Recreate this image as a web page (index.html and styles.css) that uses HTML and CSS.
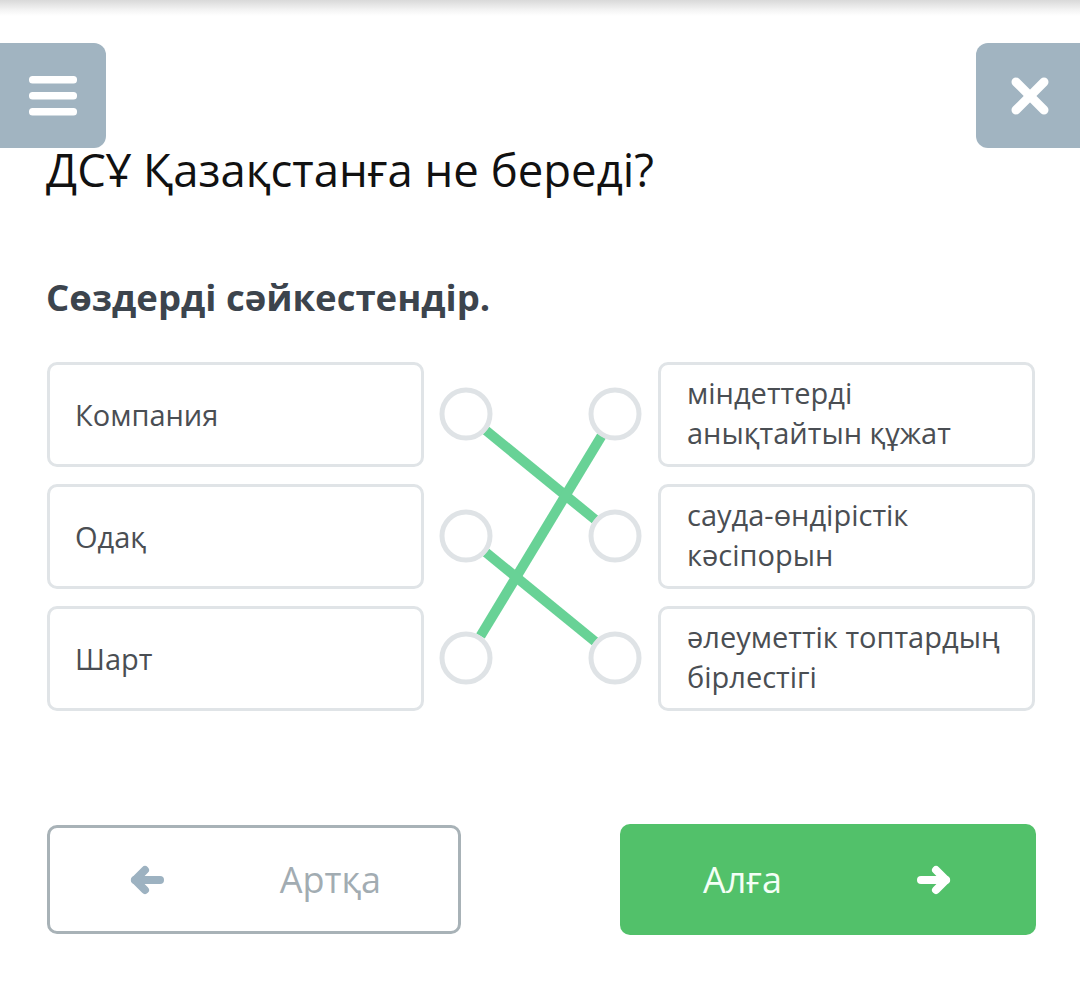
FILE: index.html
```html
<!DOCTYPE html>
<html lang="kk">
<head>
<meta charset="utf-8">
<title>ДСҰ Қазақстанға не береді?</title>
<link rel="stylesheet" href="styles.css">
</head>
<body>
<div class="topshade"></div>
<button class="nav-btn menu-btn" aria-label="Мәзір">
  <svg width="48" height="40" viewBox="0 0 48 40"><g fill="#fff"><rect x="0" y="0" width="48" height="7.5" rx="3.5"/><rect x="0" y="16" width="48" height="7.5" rx="3.5"/><rect x="0" y="32" width="48" height="7.5" rx="3.5"/></g></svg>
</button>
<button class="nav-btn close-btn" aria-label="Жабу">
  <svg width="40" height="40" viewBox="0 0 40 40"><g stroke="#fff" stroke-width="9" stroke-linecap="round"><line x1="6" y1="6" x2="34" y2="34"/><line x1="34" y1="6" x2="6" y2="34"/></g></svg>
</button>

<main class="page">
  <h1 class="title">ДСҰ Қазақстанға не береді?</h1>
  <h2 class="subtitle">Сөздерді сәйкестендір.</h2>

  <section class="match">
    <div class="card l1">Компания</div>
    <div class="card l2">Одақ</div>
    <div class="card l3">Шарт</div>

    <svg class="links" width="234" height="349" viewBox="0 0 234 349">
      <g stroke="#68d296" stroke-width="10" stroke-linecap="butt">
        <line x1="62" y1="68.5" x2="171" y2="157.5"/>
        <line x1="177.5" y1="74" x2="56.5" y2="274"/>
        <line x1="62" y1="190.5" x2="171" y2="279.5"/>
      </g>
      <g fill="none" stroke="#dfe3e6" stroke-width="5">
        <circle cx="42" cy="52" r="24"/>
        <circle cx="42" cy="174" r="24"/>
        <circle cx="42" cy="296" r="24"/>
        <circle cx="191" cy="52" r="24"/>
        <circle cx="191" cy="174" r="24"/>
        <circle cx="191" cy="296" r="24"/>
      </g>
    </svg>

    <div class="card r1">міндеттерді анықтайтын құжат</div>
    <div class="card r2">сауда-өндірістік кәсіпорын</div>
    <div class="card r3">әлеуметтік топтардың бірлестігі</div>
  </section>

  <nav class="actions">
    <button class="act back">
      <svg width="36" height="30" viewBox="0 0 36 30"><g stroke="#9db2c1" stroke-width="8" stroke-linecap="round" stroke-linejoin="round" fill="none"><line x1="6" y1="15" x2="31" y2="15"/><polyline points="16,5 6,15 16,25"/></g></svg>
      <span>Артқа</span>
    </button>
    <button class="act next">
      <span>Алға</span>
      <svg width="36" height="30" viewBox="0 0 36 30"><g stroke="#fff" stroke-width="8" stroke-linecap="round" stroke-linejoin="round" fill="none"><line x1="5" y1="15" x2="30" y2="15"/><polyline points="20,5 30,15 20,25"/></g></svg>
    </button>
  </nav>
</main>
</body>
</html>
```

FILE: styles.css
```css
* { box-sizing: border-box; }
html, body {
  margin: 0;
  padding: 0;
  background: #fff;
  font-family: "Open Sans", "Noto Sans", "DejaVu Sans", sans-serif;
}
body {
  width: 1080px;
  height: 982px;
  position: relative;
  overflow: hidden;
}
.topshade {
  height: 16px;
  background: linear-gradient(#d9d9d9, #f3f3f3 60%, #fff);
}
.nav-btn {
  position: absolute;
  top: 43px;
  width: 106px;
  height: 105px;
  border: 0;
  background: #a1b4c1;
  display: flex;
  align-items: center;
  justify-content: center;
  padding: 0;
}
.menu-btn {
  left: 0;
  border-radius: 0 12px 12px 0;
}
.close-btn {
  right: 0;
  width: 104px;
  border-radius: 12px 0 0 12px;
}
.close-btn svg { margin-left: 4px; }
.page {
  padding: 125px 44px 0 47px;
}
.title {
  margin: 0;
  font-weight: 400;
  font-size: 45.5px;
  line-height: 56px;
  color: #111;
  margin-left: -1px;
}
.subtitle {
  margin: 77px 0 0;
  font-weight: 700;
  font-size: 36.5px;
  line-height: 46px;
  color: #3c444d;
  margin-left: -1px;
}
.match {
  margin-top: 42px;
  display: grid;
  grid-template-columns: 377px 234px 377px;
  grid-template-rows: repeat(3, 105px);
  row-gap: 17px;
}
.card {
  border: 3px solid #e0e4e7;
  border-radius: 10px;
  padding: 0 20px 0 25px;
  display: flex;
  align-items: center;
  font-size: 29px;
  line-height: 40px;
  color: #4a4e53;
}
.l1 { grid-column: 1; grid-row: 1; }
.l2 { grid-column: 1; grid-row: 2; }
.l3 { grid-column: 1; grid-row: 3; }
.r1 { grid-column: 3; grid-row: 1; }
.r2 { grid-column: 3; grid-row: 2; }
.r3 { grid-column: 3; grid-row: 3; }
.r1, .r2, .r3 { padding-left: 26px; padding-right: 12px; padding-bottom: 4px; }
.links {
  grid-column: 2;
  grid-row: 1 / span 3;
  display: block;
}
.actions {
  margin-top: 113px;
  display: flex;
  justify-content: space-between;
  align-items: center;
  width: 989px;
}
.act {
  display: flex;
  align-items: center;
  justify-content: space-between;
  padding: 0 77px 0 79px;
  border-radius: 10px;
  font-family: inherit;
  font-size: 36px;
}
.back {
  width: 414px;
  height: 109px;
  background: #fff;
  border: 3px solid #a8b2b7;
  color: #a2acb2;
}
.next {
  width: 416px;
  height: 111px;
  background: #52c16a;
  border: 0;
  color: #f4fff6;
  padding: 0 84px 0 83px;
}
```
